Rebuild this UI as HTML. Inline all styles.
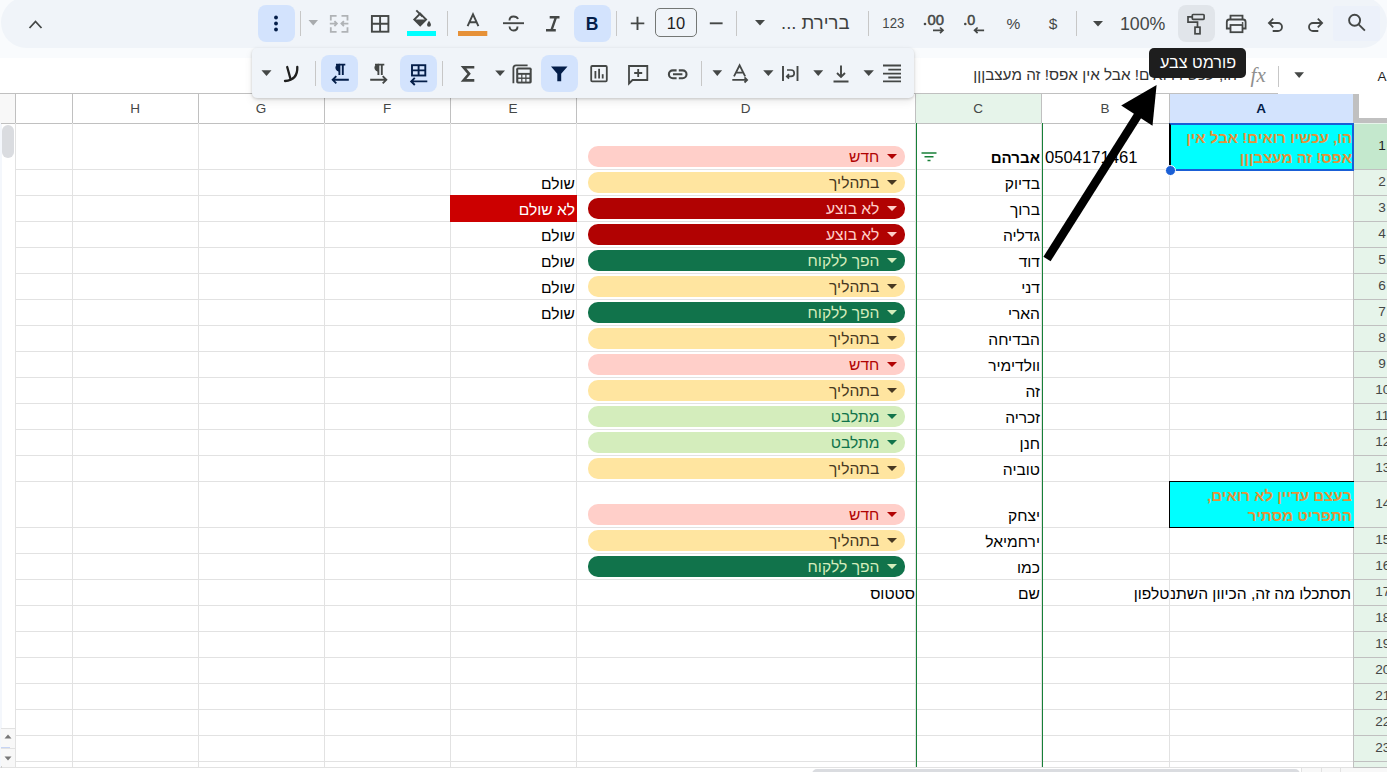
<!DOCTYPE html><html><head><meta charset="utf-8"><style>
*{box-sizing:border-box}
html,body{margin:0;padding:0}
body{width:1387px;height:772px;overflow:hidden;position:relative;background:#fff;font-family:"Liberation Sans",sans-serif;color:#000}
.a{position:absolute}
.hl{position:absolute;height:1px;background:#e2e2e2}
.vl{position:absolute;width:1px;background:#e2e2e2}
.t{position:absolute;font-size:16.67px;line-height:20px;white-space:nowrap;direction:rtl;text-align:right;color:#000}
.he{font-size:15.6px}
.hb{font-size:15.1px}
.chip{position:absolute;height:20.5px;border-radius:10px;left:588.4px;width:316.5px}
.chip .t{right:25.5px;top:1px}
.chip i{position:absolute;right:8px;top:7.6px;width:0;height:0;border-left:5.3px solid transparent;border-right:5.3px solid transparent;border-top:5.6px solid currentColor}
.rh{position:absolute;font-size:13.6px;line-height:16px;color:#444746;white-space:nowrap}
.ch{position:absolute;top:94px;height:29px;font-size:13.5px;color:#444746;text-align:center;line-height:29px}
svg{position:absolute;overflow:visible}
</style></head><body>
<div class="a" style="left:0;top:0;width:1387px;height:58px;background:#f9fbfd"></div>
<div class="a" style="left:1px;top:-3px;width:1386px;height:50.8px;border-radius:25.4px;background:#f0f4f9"></div>
<div class="a" style="left:258px;top:5px;width:37px;height:37px;border-radius:8px;background:#d3e3fd"></div>
<div class="a" style="left:574px;top:5px;width:37px;height:37px;border-radius:8px;background:#d3e3fd"></div>
<div class="a" style="left:1178px;top:5px;width:37px;height:37px;border-radius:8px;background:#e1e5ea"></div>
<div class="a" style="left:1333px;top:6px;width:47px;height:35px;border-radius:3px;background:#ecf1fa"></div>
<div class="a" style="left:655px;top:8px;width:42px;height:29px;border:1px solid #747775;border-radius:5px"></div>
<svg style="left:0;top:0" width="1387" height="58"><rect x="300" y="11" width="1" height="25" fill="#c7c7c7"/><rect x="447" y="11" width="1" height="25" fill="#c7c7c7"/><rect x="616" y="11" width="1" height="25" fill="#c7c7c7"/><rect x="736" y="11" width="1" height="25" fill="#c7c7c7"/><rect x="868" y="11" width="1" height="25" fill="#c7c7c7"/><rect x="1076" y="11" width="1" height="25" fill="#c7c7c7"/><path d="M29.5 28 L35.5 21.5 L41.5 28" fill="none" stroke="#444746" stroke-width="1.8"/><circle cx="276" cy="17.5" r="1.9" fill="#041e49"/><circle cx="276" cy="23.5" r="1.9" fill="#041e49"/><circle cx="276" cy="29.5" r="1.9" fill="#041e49"/><path d="M308.5 20 L318 20 L313.25 25.5Z" fill="#a8abae"/><g fill="none" stroke="#b0b3b6" stroke-width="1.8"><path d="M336.6 15.8h-5.8v4.6M336.6 31.8h-5.8v-4.6M341.5 15.8h6v4.6M341.5 31.8h6v-4.6"/><path d="M329.8 23.6h7M334.4 21.1l2.5 2.5-2.5 2.5M348.4 23.6h-7M343.9 21.1l-2.5 2.5 2.5 2.5"/></g><g fill="none" stroke="#444746" stroke-width="1.9"><rect x="371.9" y="16" width="16.5" height="15.7"/><path d="M380.1 16v15.7M371.9 23.8h16.5"/></g><g fill="none" stroke="#444746" stroke-width="1.9"><path d="M416.3 10.3l6.2 6.2"/><path d="M420.2 13.6l5.9 5.9-5.9 5.9-5.9-5.9z" stroke-linejoin="miter"/></g><path d="M414.3 19.5h11.8l-5.9 5.9z" fill="#444746"/><path d="M429 20.8q-2 2.8-2 3.9a2 2 0 0 0 4 0q0-1.1-2-3.9z" fill="#444746"/><rect x="407" y="31" width="29" height="5" fill="#00ffff"/><path d="M467.6 26.2L473 14.3L478.4 26.2M469.3 22.3h7.4" fill="none" stroke="#444746" stroke-width="1.9"/><rect x="458" y="31" width="29.3" height="5" fill="#e69138"/><g fill="none" stroke="#444746" stroke-width="1.9"><path d="M503 23.2h21"/><path d="M509.5 20.5 q0-4 4-4 q3.5 0 4.5 2.5"/><path d="M509.5 26.5 q0.5 4 4 4 q4 0 4-4"/></g><path d="M549.7 17.2h9.8M546 30.3h9.8M556 17.2l-4.6 13.1" fill="none" stroke="#444746" stroke-width="2.4"/><text x="592" y="30.2" font-size="17.5" font-weight="bold" fill="#041e49" text-anchor="middle" font-family="Liberation Sans">B</text><path d="M637.5 16.7v13.4M630.8 23.4h13.5" stroke="#444746" stroke-width="1.9"/><text x="676" y="28.6" font-size="16.5" fill="#1f1f1f" text-anchor="middle" font-family="Liberation Sans">10</text><path d="M709.8 23.3h12.8" stroke="#444746" stroke-width="1.9"/><path d="M755 20 L765 20 L760.0 25.6Z" fill="#444746"/><text x="893.3" y="28.2" font-size="14.5" fill="#444746" text-anchor="middle" font-family="Liberation Sans" textLength="22" lengthAdjust="spacingAndGlyphs">123</text><circle cx="925" cy="24" r="1.3" fill="#444746"/><text x="927.5" y="25.4" font-size="14.5" fill="#444746" stroke="#444746" stroke-width="0.5" font-family="Liberation Sans" textLength="16.5" lengthAdjust="spacingAndGlyphs">00</text><path d="M933 30.3h10M940 27.5l3 2.8-3 2.8" fill="none" stroke="#444746" stroke-width="1.7"/><circle cx="965.3" cy="24" r="1.3" fill="#444746"/><text x="967.3" y="25.4" font-size="14.5" fill="#444746" stroke="#444746" stroke-width="0.5" font-family="Liberation Sans" textLength="8" lengthAdjust="spacingAndGlyphs">0</text><path d="M974.6 30.3h9.5M977.6 27.5l-3 2.8 3 2.8" fill="none" stroke="#444746" stroke-width="1.7"/><text x="1013.3" y="29" font-size="15.5" fill="#444746" text-anchor="middle" font-family="Liberation Sans">%</text><text x="1053" y="29" font-size="15.5" fill="#444746" text-anchor="middle" font-family="Liberation Sans">$</text><path d="M1093 21 L1103 21 L1098.0 26.6Z" fill="#444746"/><text x="1142.7" y="29.7" font-size="17.8" fill="#444746" text-anchor="middle" font-family="Liberation Sans">100%</text><g fill="none" stroke="#444746" stroke-width="1.7"><rect x="1192.3" y="14.5" width="11.8" height="4.9" rx="0.8"/><path d="M1192.3 16.9h-4.3v5.3h9.5v4.9"/><rect x="1195" y="27.2" width="5" height="6.6"/></g><g fill="none" stroke="#444746" stroke-width="1.8"><path d="M1230.5 19.6v-4h12v4"/><path d="M1230 28.5h-3.2v-6.5q0-2.5 2.5-2.5h13.8q2.5 0 2.5 2.5v6.5h-3.2"/><rect x="1230.5" y="25" width="12" height="7.2"/></g><circle cx="1242.6" cy="23" r="0.9" fill="#444746"/><g fill="none" stroke="#444746" stroke-width="1.8"><path d="M1269.5 23h8.5a4 4 0 0 1 0 8h-5.3"/><path d="M1273.2 18.7l-4.3 4.3 4.3 4.3"/></g><g fill="none" stroke="#444746" stroke-width="1.8"><path d="M1321.5 23h-8.5a4 4 0 0 0 0 8h5.3"/><path d="M1317.8 18.7l4.3 4.3-4.3 4.3"/></g><g fill="none" stroke="#444746" stroke-width="1.9"><circle cx="1354.6" cy="20.3" r="5.5"/><path d="M1358.6 24.3l6.3 6.3"/></g></svg>
<div class="t" style="right:537.5px;top:12.5px;color:#3d3f3e;font-size:16.5px"><span style="font-size:18.5px">ברירת ...</span></div>
<div class="a" style="left:0;top:58px;width:1387px;height:36px;background:#fff"></div>
<div class="t" style="right:150px;top:65px;color:#333"><span class="he" style="font-size:15.3px">הו, עכשיו רואים! אבל אין אפס! זה מעצבןןן</span></div>
<svg style="left:0;top:0" width="1387" height="100"><text x="1258.2" y="81.5" font-size="21" font-style="italic" fill="#8f8f8f" text-anchor="middle" font-family="Liberation Serif">fx</text><rect x="1278" y="66" width="1" height="21" fill="#c7c7c7"/><path d="M1294.3 72.3h9.7l-4.85 5.6z" fill="#444746"/><text x="1377.5" y="81" font-size="13.5" fill="#1f1f1f" font-family="Liberation Sans">A1</text></svg>
<div class="a" style="left:0;top:93px;width:1387px;height:30px;background:#fff"></div>
<div class="a" style="left:0;top:94px;width:15px;height:29px;background:#f8f8f8"></div>
<div class="a" style="left:0;top:123px;width:2px;height:649px;background:#f4f7fc"></div>
<div class="a" style="left:916px;top:94px;width:125px;height:29px;background:#e6f4ea"></div>
<div class="a" style="left:1170px;top:94px;width:183px;height:29px;background:#d3e3fd"></div>
<div class="a" style="left:1354px;top:123px;width:33px;height:649px;background:#e6f4ea"></div>
<div class="a" style="left:1354px;top:124px;width:33px;height:45px;background:#c4e8cd"></div>
<div class="a" style="left:1353px;top:94px;width:34px;height:29px;background:#fff;border-left:6px solid #c0c0c0;border-bottom:5px solid #c0c0c0"></div>
<div class="hl" style="left:15px;top:169px;width:1338px"></div>
<div class="hl" style="left:1353px;top:169px;width:34px;background:#c0c0c0"></div>
<div class="hl" style="left:15px;top:195px;width:1338px"></div>
<div class="hl" style="left:1353px;top:195px;width:34px;background:#c0c0c0"></div>
<div class="hl" style="left:15px;top:221px;width:1338px"></div>
<div class="hl" style="left:1353px;top:221px;width:34px;background:#c0c0c0"></div>
<div class="hl" style="left:15px;top:247px;width:1338px"></div>
<div class="hl" style="left:1353px;top:247px;width:34px;background:#c0c0c0"></div>
<div class="hl" style="left:15px;top:273px;width:1338px"></div>
<div class="hl" style="left:1353px;top:273px;width:34px;background:#c0c0c0"></div>
<div class="hl" style="left:15px;top:299px;width:1338px"></div>
<div class="hl" style="left:1353px;top:299px;width:34px;background:#c0c0c0"></div>
<div class="hl" style="left:15px;top:325px;width:1338px"></div>
<div class="hl" style="left:1353px;top:325px;width:34px;background:#c0c0c0"></div>
<div class="hl" style="left:15px;top:351px;width:1338px"></div>
<div class="hl" style="left:1353px;top:351px;width:34px;background:#c0c0c0"></div>
<div class="hl" style="left:15px;top:377px;width:1338px"></div>
<div class="hl" style="left:1353px;top:377px;width:34px;background:#c0c0c0"></div>
<div class="hl" style="left:15px;top:403px;width:1338px"></div>
<div class="hl" style="left:1353px;top:403px;width:34px;background:#c0c0c0"></div>
<div class="hl" style="left:15px;top:429px;width:1338px"></div>
<div class="hl" style="left:1353px;top:429px;width:34px;background:#c0c0c0"></div>
<div class="hl" style="left:15px;top:455px;width:1338px"></div>
<div class="hl" style="left:1353px;top:455px;width:34px;background:#c0c0c0"></div>
<div class="hl" style="left:15px;top:481px;width:1338px"></div>
<div class="hl" style="left:1353px;top:481px;width:34px;background:#c0c0c0"></div>
<div class="hl" style="left:15px;top:527px;width:1338px"></div>
<div class="hl" style="left:1353px;top:527px;width:34px;background:#c0c0c0"></div>
<div class="hl" style="left:15px;top:553px;width:1338px"></div>
<div class="hl" style="left:1353px;top:553px;width:34px;background:#c0c0c0"></div>
<div class="hl" style="left:15px;top:579px;width:1338px"></div>
<div class="hl" style="left:1353px;top:579px;width:34px;background:#c0c0c0"></div>
<div class="hl" style="left:15px;top:605px;width:1338px"></div>
<div class="hl" style="left:1353px;top:605px;width:34px;background:#c0c0c0"></div>
<div class="hl" style="left:15px;top:631px;width:1338px"></div>
<div class="hl" style="left:1353px;top:631px;width:34px;background:#c0c0c0"></div>
<div class="hl" style="left:15px;top:657px;width:1338px"></div>
<div class="hl" style="left:1353px;top:657px;width:34px;background:#c0c0c0"></div>
<div class="hl" style="left:15px;top:683px;width:1338px"></div>
<div class="hl" style="left:1353px;top:683px;width:34px;background:#c0c0c0"></div>
<div class="hl" style="left:15px;top:709px;width:1338px"></div>
<div class="hl" style="left:1353px;top:709px;width:34px;background:#c0c0c0"></div>
<div class="hl" style="left:15px;top:735px;width:1338px"></div>
<div class="hl" style="left:1353px;top:735px;width:34px;background:#c0c0c0"></div>
<div class="hl" style="left:15px;top:761px;width:1338px"></div>
<div class="hl" style="left:1353px;top:761px;width:34px;background:#c0c0c0"></div>
<div class="hl" style="left:0;top:93px;width:1278px;background:#c0c0c0"></div>
<div class="hl" style="left:1px;top:123px;width:1352px;background:#c0c0c0"></div>
<div class="vl" style="left:15px;top:123px;height:645px"></div>
<div class="vl" style="left:15px;top:94px;height:29px;background:#c0c0c0"></div>
<div class="vl" style="left:72px;top:123px;height:645px"></div>
<div class="vl" style="left:72px;top:94px;height:29px;background:#c0c0c0"></div>
<div class="vl" style="left:198px;top:123px;height:645px"></div>
<div class="vl" style="left:198px;top:94px;height:29px;background:#c0c0c0"></div>
<div class="vl" style="left:324px;top:123px;height:645px"></div>
<div class="vl" style="left:324px;top:94px;height:29px;background:#c0c0c0"></div>
<div class="vl" style="left:450px;top:123px;height:645px"></div>
<div class="vl" style="left:450px;top:94px;height:29px;background:#c0c0c0"></div>
<div class="vl" style="left:576px;top:123px;height:645px"></div>
<div class="vl" style="left:576px;top:94px;height:29px;background:#c0c0c0"></div>
<div class="vl" style="left:915px;top:123px;height:645px"></div>
<div class="vl" style="left:915px;top:94px;height:29px;background:#c0c0c0"></div>
<div class="vl" style="left:1041px;top:123px;height:645px"></div>
<div class="vl" style="left:1041px;top:94px;height:29px;background:#c0c0c0"></div>
<div class="vl" style="left:1169px;top:123px;height:645px"></div>
<div class="vl" style="left:1169px;top:94px;height:29px;background:#c0c0c0"></div>
<div class="vl" style="left:1353px;top:123px;height:645px"></div>
<div class="vl" style="left:1353px;top:94px;height:29px;background:#c0c0c0"></div>
<div class="vl" style="left:1353px;top:94px;height:678px;background:#c0c0c0"></div>
<div class="ch" style="left:72px;width:126px">H</div>
<div class="ch" style="left:198px;width:126px">G</div>
<div class="ch" style="left:324px;width:126px">F</div>
<div class="ch" style="left:450px;width:126px">E</div>
<div class="ch" style="left:576px;width:339px">D</div>
<div class="ch" style="left:915px;width:126px">C</div>
<div class="ch" style="left:1041px;width:128px">B</div>
<div class="ch" style="left:1169px;width:184px;color:#041e49;font-weight:bold">A</div>
<div class="rh" style="color:#1f1f1f;left:1378.3px;top:138.0px">1</div>
<div class="rh" style="left:1378.3px;top:174.0px">2</div>
<div class="rh" style="left:1378.3px;top:200.0px">3</div>
<div class="rh" style="left:1378.3px;top:226.0px">4</div>
<div class="rh" style="left:1378.3px;top:252.0px">5</div>
<div class="rh" style="left:1378.3px;top:278.0px">6</div>
<div class="rh" style="left:1378.3px;top:304.0px">7</div>
<div class="rh" style="left:1378.3px;top:330.0px">8</div>
<div class="rh" style="left:1378.3px;top:356.0px">9</div>
<div class="rh" style="left:1375.3px;top:382.0px">10</div>
<div class="rh" style="left:1375.3px;top:408.0px">11</div>
<div class="rh" style="left:1375.3px;top:434.0px">12</div>
<div class="rh" style="left:1375.3px;top:460.0px">13</div>
<div class="rh" style="left:1375.3px;top:496.0px">14</div>
<div class="rh" style="left:1375.3px;top:532.0px">15</div>
<div class="rh" style="left:1375.3px;top:558.0px">16</div>
<div class="rh" style="left:1375.3px;top:584.0px">17</div>
<div class="rh" style="left:1375.3px;top:610.0px">18</div>
<div class="rh" style="left:1375.3px;top:636.0px">19</div>
<div class="rh" style="left:1375.3px;top:662.0px">20</div>
<div class="rh" style="left:1375.3px;top:688.0px">21</div>
<div class="rh" style="left:1375.3px;top:714.0px">22</div>
<div class="rh" style="left:1375.3px;top:740.0px">23</div>
<div class="a" style="left:1170px;top:124px;width:184px;height:46px;background:#00ffff"></div>
<div class="t" style="right:35px;top:128px;color:#e69138;font-weight:bold;line-height:19.5px"><span class="hb">הו, עכשיו רואים! אבל אין</span><br><span class="hb">אפס! זה מעצבןןן</span></div>
<div class="a" style="left:1169px;top:481px;width:185px;height:47px;background:#00ffff;border:1.5px solid #000;border-right:none"></div>
<div class="t" style="right:35px;top:486px;color:#e69138;font-weight:bold;line-height:19.8px"><span class="hb">בעצם עדיין לא רואים,</span><br><span class="hb">התפריט מסתיר</span></div>
<div class="a" style="left:1170px;top:579px;width:183px;height:26px;overflow:hidden"><div class="t" style="right:2px;top:5px"><span class="he">תסתכלו מה זה, הכיוון השתנה</span></div></div>
<div class="t" style="right:217.5px;top:584px;"><span class="he">טלפון</span></div>
<div class="t" style="left:1045px;top:148px;direction:ltr;text-align:left">0504171461</div>
<div class="t" style="right:347px;top:148px;font-weight:bold"><span class="hb">אברהם</span></div>
<div class="t" style="right:347px;top:174px;"><span class="he">בדיוק</span></div>
<div class="t" style="right:347px;top:200px;"><span class="he">ברוך</span></div>
<div class="t" style="right:347px;top:226px;"><span class="he">גדליה</span></div>
<div class="t" style="right:347px;top:252px;"><span class="he">דוד</span></div>
<div class="t" style="right:347px;top:278px;"><span class="he">דני</span></div>
<div class="t" style="right:347px;top:304px;"><span class="he">הארי</span></div>
<div class="t" style="right:347px;top:330px;"><span class="he">הבדיחה</span></div>
<div class="t" style="right:347px;top:356px;"><span class="he">וולדימיר</span></div>
<div class="t" style="right:347px;top:382px;"><span class="he">זה</span></div>
<div class="t" style="right:347px;top:408px;"><span class="he">זכריה</span></div>
<div class="t" style="right:347px;top:434px;"><span class="he">חנן</span></div>
<div class="t" style="right:347px;top:460px;"><span class="he">טוביה</span></div>
<div class="t" style="right:347px;top:506px;"><span class="he">יצחק</span></div>
<div class="t" style="right:347px;top:532px;"><span class="he">ירחמיאל</span></div>
<div class="t" style="right:347px;top:558px;"><span class="he">כמו</span></div>
<div class="t" style="right:347px;top:584px;"><span class="he">שם</span></div>
<div class="t" style="right:472px;top:584px;"><span class="he">סטטוס</span></div>
<div class="t" style="right:812px;top:174px;"><span class="he">שולם</span></div>
<div class="t" style="right:812px;top:226px;"><span class="he">שולם</span></div>
<div class="t" style="right:812px;top:252px;"><span class="he">שולם</span></div>
<div class="t" style="right:812px;top:278px;"><span class="he">שולם</span></div>
<div class="t" style="right:812px;top:304px;"><span class="he">שולם</span></div>
<div class="a" style="left:450px;top:195px;width:127px;height:27px;background:#cc0000"></div>
<div class="t" style="right:812px;top:200px;color:#fff"><span class="he">לא שולם</span></div>
<div class="chip" style="top:146px;background:#ffcfc9;color:#b10202"><i></i><div class="t" style="color:#b10202"><span class="he">חדש</span></div></div>
<div class="chip" style="top:172px;background:#ffe5a0;color:#473821"><i></i><div class="t" style="color:#473821"><span class="he">בתהליך</span></div></div>
<div class="chip" style="top:198px;background:#b10202;color:#ffcfc9"><i></i><div class="t" style="color:#ffcfc9"><span class="he">לא בוצע</span></div></div>
<div class="chip" style="top:224px;background:#b10202;color:#ffcfc9"><i></i><div class="t" style="color:#ffcfc9"><span class="he">לא בוצע</span></div></div>
<div class="chip" style="top:250px;background:#11734b;color:#d4edbc"><i></i><div class="t" style="color:#d4edbc"><span class="he">הפך ללקוח</span></div></div>
<div class="chip" style="top:276px;background:#ffe5a0;color:#473821"><i></i><div class="t" style="color:#473821"><span class="he">בתהליך</span></div></div>
<div class="chip" style="top:302px;background:#11734b;color:#d4edbc"><i></i><div class="t" style="color:#d4edbc"><span class="he">הפך ללקוח</span></div></div>
<div class="chip" style="top:328px;background:#ffe5a0;color:#473821"><i></i><div class="t" style="color:#473821"><span class="he">בתהליך</span></div></div>
<div class="chip" style="top:354px;background:#ffcfc9;color:#b10202"><i></i><div class="t" style="color:#b10202"><span class="he">חדש</span></div></div>
<div class="chip" style="top:380px;background:#ffe5a0;color:#473821"><i></i><div class="t" style="color:#473821"><span class="he">בתהליך</span></div></div>
<div class="chip" style="top:406px;background:#d4edbc;color:#11734b"><i></i><div class="t" style="color:#11734b"><span class="he">מתלבט</span></div></div>
<div class="chip" style="top:432px;background:#d4edbc;color:#11734b"><i></i><div class="t" style="color:#11734b"><span class="he">מתלבט</span></div></div>
<div class="chip" style="top:458px;background:#ffe5a0;color:#473821"><i></i><div class="t" style="color:#473821"><span class="he">בתהליך</span></div></div>
<div class="chip" style="top:504px;background:#ffcfc9;color:#b10202"><i></i><div class="t" style="color:#b10202"><span class="he">חדש</span></div></div>
<div class="chip" style="top:530px;background:#ffe5a0;color:#473821"><i></i><div class="t" style="color:#473821"><span class="he">בתהליך</span></div></div>
<div class="chip" style="top:556px;background:#11734b;color:#d4edbc"><i></i><div class="t" style="color:#d4edbc"><span class="he">הפך ללקוח</span></div></div>
<svg style="left:0;top:0" width="1" height="1"><path d="M921.5 153h15M924.5 156.8h9M927.5 160.5h3" stroke="#188038" stroke-width="1.5"/></svg>
<div class="vl" style="left:916px;top:123px;height:645px;background:#188038"></div>
<div class="vl" style="left:1042px;top:123px;height:645px;background:#188038"></div>
<div class="a" style="left:1169px;top:123px;width:185px;height:48px;border:2px solid #1a5fd6;border-left-color:#000"></div>
<div class="a" style="left:1164.5px;top:164.5px;width:11px;height:11px;border-radius:50%;background:#1a5fd6;border:1px solid #fff"></div>
<div class="a" style="left:2px;top:125px;width:12px;height:33px;border-radius:6px;background:#dadce0"></div>
<div class="a" style="left:1px;top:729px;width:14px;height:38px;background:#f8f8f8"></div>
<svg style="left:0;top:0" width="1" height="1"><path d="M4.5 738.5h7l-3.5-4z" fill="#777"/><path d="M4.5 756.5h7l-3.5 4z" fill="#777"/><rect x="1" y="728" width="14" height="1" fill="#e2e2e2"/><rect x="1" y="748" width="14" height="1" fill="#e2e2e2"/><rect x="1" y="747" width="9" height="1" fill="#c6d4f5"/><rect x="0" y="767" width="1387" height="1" fill="#e2e2e2"/><rect x="1" y="766" width="1" height="6" fill="#d0d0d0"/></svg>
<div class="a" style="left:0;top:768px;width:1353px;height:4px;background:#fff"></div>
<div class="a" style="left:812px;top:769px;width:488px;height:10px;border-radius:5px;background:#dadce0"></div>
<div class="a" style="left:1301px;top:768px;width:86px;height:4px;background:#f8f8f8"></div>
<div class="a" style="left:1353px;top:767px;width:34px;height:1px;background:#c0c0c0"></div>
<div class="a" style="left:1301px;top:768px;width:1px;height:4px;background:#e2e2e2"></div><div class="a" style="left:1321px;top:768px;width:1px;height:4px;background:#e2e2e2"></div><div class="a" style="left:1340px;top:768px;width:1px;height:4px;background:#e2e2e2"></div>
<div class="a" style="left:252px;top:48px;width:662px;height:50px;background:#f0f4f9;border-radius:5px;box-shadow:0 1px 3px rgba(0,0,0,.18),0 4px 8px rgba(0,0,0,.08)"></div>
<div class="a" style="left:321px;top:55px;width:37px;height:37px;border-radius:8px;background:#d3e3fd"></div>
<div class="a" style="left:400px;top:55px;width:37px;height:37px;border-radius:8px;background:#d3e3fd"></div>
<div class="a" style="left:541px;top:55px;width:37px;height:37px;border-radius:8px;background:#d3e3fd"></div>
<svg style="left:0;top:0" width="1" height="1"><path d="M261.5 70.3 L271.5 70.3 L266.5 75.89999999999999Z" fill="#444746"/><g fill="none" stroke="#1f1f1f" stroke-width="2.3" stroke-linecap="round"><path d="M287.2 67 L290.3 78.3"/><path d="M297.3 67 C297.6 75, 294 80.3, 285 81"/></g><rect x="315" y="61" width="1" height="25" fill="#c7c7c7"/><rect x="442" y="61" width="1" height="25" fill="#c7c7c7"/><rect x="701" y="61" width="1" height="25" fill="#c7c7c7"/><g fill="none" stroke="#041e49" stroke-width="1.9"><path d="M339.4 64.5v10.6M342.8 64.5v10.6M336 64.6h9.3"/><path d="M332.5 79.8h16.3M336.3 76.2l-3.6 3.6 3.6 3.6"/></g><path d="M340 63.7v8a4.6 4 0 0 1 0-8z" fill="#041e49"/><g fill="none" stroke="#444746" stroke-width="1.9"><path d="M378.4 64.5v10.6M381.8 64.5v10.6M375 64.6h9.3"/><path d="M370.2 79.8h16.3M382.7 76.2l3.6 3.6-3.6 3.6"/></g><path d="M379 63.7v8a4.6 4 0 0 1 0-8z" fill="#444746"/><g fill="none" stroke="#041e49" stroke-width="1.9"><rect x="412" y="65.2" width="13.3" height="10.3"/><path d="M418.6 65.2v10.3M412 70.4h13.3"/><path d="M411 81.4h16.3M414.8 77.8l-3.6 3.6 3.6 3.6"/></g><path d="M474.3 67.2h-10.8l5.6 6.6-5.6 6.6h10.8" fill="none" stroke="#444746" stroke-width="2.6" stroke-linejoin="miter"/><path d="M495.2 70.4 L505 70.4 L500.1 76.0Z" fill="#444746"/><path d="M527.6 65.4h-11.6q-2.6 0-2.6 2.6v15.3" fill="none" stroke="#444746" stroke-width="1.8"/><rect x="516.2" y="67.6" width="15.5" height="15.8" rx="1.6" fill="#444746"/><rect x="518.2" y="69.5" width="11.5" height="3.4" fill="#f0f4f9"/><rect x="518.3" y="74.8" width="2.9" height="2.7" fill="#f0f4f9"/><rect x="518.3" y="78.89999999999999" width="2.9" height="2.7" fill="#f0f4f9"/><rect x="522.4" y="74.8" width="2.9" height="2.7" fill="#f0f4f9"/><rect x="522.4" y="78.89999999999999" width="2.9" height="2.7" fill="#f0f4f9"/><rect x="526.5" y="74.8" width="2.9" height="2.7" fill="#f0f4f9"/><rect x="526.5" y="78.89999999999999" width="2.9" height="2.7" fill="#f0f4f9"/><path d="M551 66.5h16.5l-6.3 7.3v7.5h-3.9v-7.5z" fill="#041e49"/><g fill="none" stroke="#444746" stroke-width="1.8"><rect x="591.2" y="66" width="15.6" height="15.3" rx="1"/></g><g fill="#444746"><rect x="594.5" y="71" width="1.8" height="7.5"/><rect x="598.2" y="68.8" width="1.8" height="9.7"/><rect x="601.8" y="74.2" width="1.8" height="4.3"/></g><g fill="none" stroke="#444746" stroke-width="1.8"><path d="M629 66h18.3v14h-14.8l-3.5 3.5z"/><path d="M638.2 69v8M634.2 73h8"/></g><g fill="none" stroke="#444746" stroke-width="2.1"><path d="M676.6 70.4h-3.8a3.9 3.9 0 0 0 0 7.8h3.8M678.8 70.4h3.8a3.9 3.9 0 0 1 0 7.8h-3.8M673 74.3h9.4"/></g><path d="M712.5 70.3 L722.1 70.3 L717.3 75.89999999999999Z" fill="#444746"/><g fill="none" stroke="#444746" stroke-width="1.8"><path d="M734 76.3L739.6 65.3L745.2 76.3M735.8 72.6h7.6"/><path d="M732.3 79.9h14.6M744.5 77.3l2.6 2.6-2.6 2.6"/></g><path d="M763.2 70.3 L773.5 70.3 L768.35 75.89999999999999Z" fill="#444746"/><g fill="none" stroke="#444746" stroke-width="1.9"><path d="M783 66v15M797.5 66v15"/><path d="M787 70h4a3.2 3.2 0 0 1 0 6.4h-4M789 74.2l-2.2 2.2 2.2 2.2" stroke-width="1.7"/></g><path d="M813.3 70.3 L823.2 70.3 L818.25 75.89999999999999Z" fill="#444746"/><g fill="none" stroke="#444746" stroke-width="1.9"><path d="M833.5 81.5h15M841 65.5v11.5M837 73l4 4 4-4"/></g><path d="M863.5 70.3 L873.9 70.3 L868.7 75.89999999999999Z" fill="#444746"/><g fill="none" stroke="#444746" stroke-width="1.9"><path d="M883 65.5h18M888.3 69.6h12.7M883 73.6h18M888.3 77.5h12.7M883 81.4h18"/></g></svg>
<div class="a" style="left:1149px;top:48px;width:97px;height:30px;background:#1e1e1e;border-radius:5px"></div>
<div class="t" style="right:151px;top:52px;color:#fff"><span style="font-size:16.2px">פורמט צבע</span></div>
<svg style="left:0;top:0" width="1" height="1"><path d="M1047 259 L1140 112" stroke="#000" stroke-width="8.5" fill="none"/><path d="M1156.6 85 L1121.2 105.4 L1152.5 125.8Z" fill="#000"/></svg>
</body></html>
